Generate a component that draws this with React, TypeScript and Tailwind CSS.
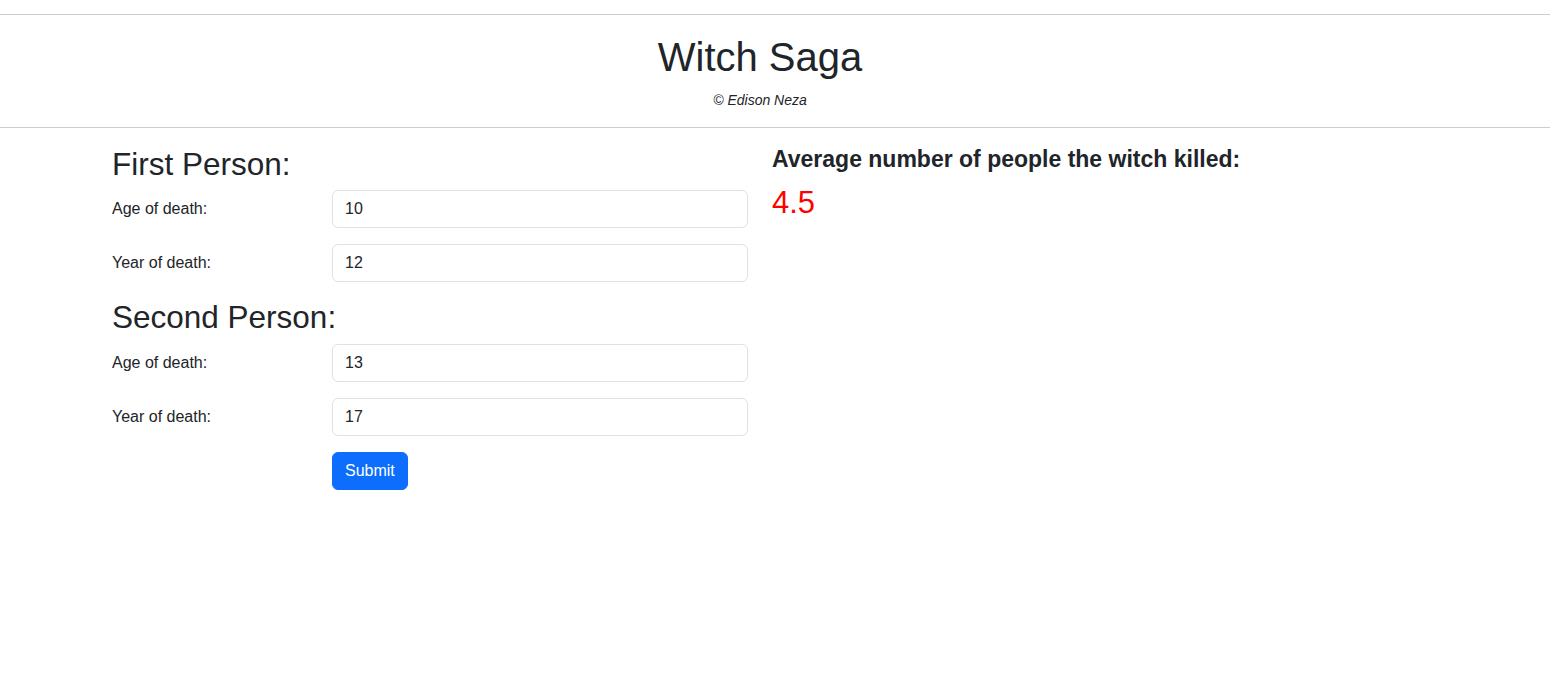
import { useState } from 'react';

const Field = ({ label, value }: { label: string; value: string }) => {
  const [val, setVal] = useState(value);
  return (
    <div className="flex items-center mb-4">
      <label className="w-[220px] text-base leading-6">{label}</label>
      <input
        type="text"
        value={val}
        onChange={(e) => setVal(e.target.value)}
        className="flex-1 h-[38px] px-3 border border-[#dee2e6] rounded-md text-base text-[#212529] outline-none"
      />
    </div>
  );
};

const App = () => {
  return (
    <div className="min-h-screen bg-white text-[#212529] font-['Liberation_Sans',Arial,sans-serif]">
      {/* Header */}
      <div className="mt-[14px] border-t border-b border-[#cdcdcd]">
        <div className="w-[1520px] text-center pt-[18px] pb-[17px]">
          <h1 className="text-[40px] leading-[48px]">Witch Saga</h1>
          <p className="mt-[9px] text-sm italic leading-5">© Edison Neza</p>
        </div>
      </div>

      <div className="flex pl-[112px] gap-6 pt-[17px]">
        {/* Left column */}
        <div className="w-[636px]">
          <h2 className="text-[31.5px] leading-[38px] mb-[7px]">First Person:</h2>
          <Field label="Age of death:" value="10" />
          <Field label="Year of death:" value="12" />

          <h2 className="text-[31.5px] leading-[38px] mt-[3px] mb-[8px]">Second Person:</h2>
          <Field label="Age of death:" value="13" />
          <Field label="Year of death:" value="17" />

          <div className="pl-[220px]">
            <button className="h-[38px] px-3 bg-[#0d6efd] border border-[#0d6efd] text-white text-base rounded-md">
              Submit
            </button>
          </div>
        </div>

        {/* Right column */}
        <div className="flex-1">
          <h4 className="text-[23px] leading-[29px] font-semibold">Average number of people the witch killed:</h4>
          <h2 className="mt-[10px] text-[31px] leading-[38px] text-[#ff0000]">4.5</h2>
        </div>
      </div>
    </div>
  );
};

export default App;
